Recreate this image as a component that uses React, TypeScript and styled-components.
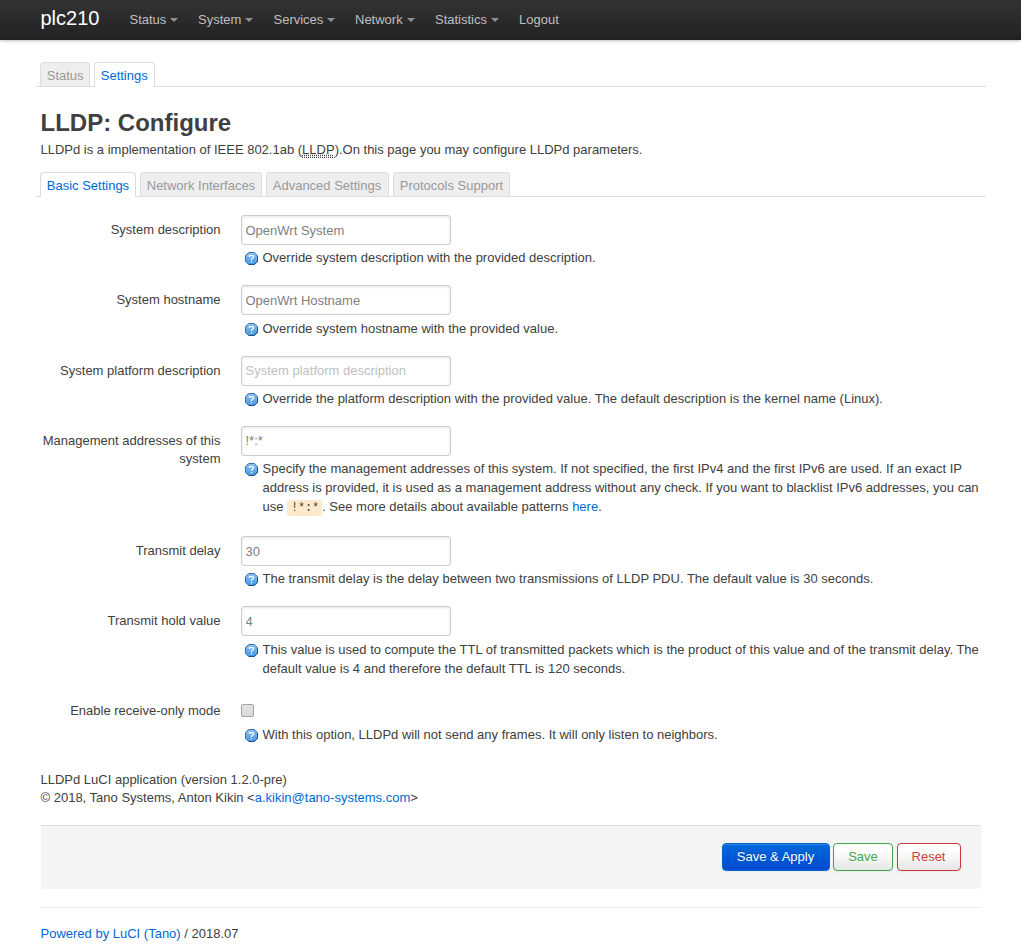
import React from "react";
import styled, { createGlobalStyle, css } from "styled-components";

const GlobalStyle = createGlobalStyle`
  * { box-sizing: border-box; }
  body {
    margin: 0;
    background: #fff;
    color: #404040;
    font-family: "Liberation Sans", Arial, sans-serif;
    font-size: 13px;
    line-height: 18px;
  }
  a { color: #0069d6; text-decoration: none; }
`;

const Header = styled.header`
  height: 40px;
  background: linear-gradient(#333, #222);
  box-shadow: 0 1px 3px rgba(0, 0, 0, 0.25), inset 0 -1px 0 rgba(0, 0, 0, 0.1);
`;

const Container = styled.div`
  width: 940px;
  margin: 0 auto;
`;

const Nav = styled(Container)`
  display: flex;
  height: 40px;
`;

const Brand = styled.a`
  width: 79px;
  padding-top: 8px;
  font-size: 20px;
  line-height: 20px;
  color: #fff;
`;

const NavItem = styled.a<{ $w: number }>`
  display: flex;
  width: ${(p) => p.$w}px;
  padding: 10px 10px 11px;
  line-height: 19px;
  color: #bfbfbf;
  white-space: nowrap;
`;

const Caret = styled.i`
  width: 0;
  height: 0;
  margin: 8px 0 0 4px;
  border: 4px solid transparent;
  border-bottom: 0;
  border-top-color: #909090;
`;

const Tabs = styled.nav<{ $gap: number }>`
  display: flex;
  align-items: flex-end;
  gap: 4px;
  width: 950px;
  height: 25px;
  margin: ${(p) => p.$gap}px 0 0 -4.5px;
  padding-left: 4px;
  border-bottom: 1px solid #ddd;
`;

const Tab = styled.a<{ $active?: boolean; $w: number }>`
  width: ${(p) => p.$w}px;
  height: 24px;
  padding: 4px 0 0 5.75px;
  border: 1px solid #ddd;
  border-bottom: 0;
  border-radius: 4px 4px 0 0;
  background: #eee;
  color: #999;
  white-space: nowrap;
  ${(p) =>
    p.$active &&
    css`
      height: 25px;
      margin-bottom: -1px;
      background: #fff;
      color: #0069d6;
    `}
`;

const Title = styled.h2`
  margin: 18px 0 0;
  font-size: 24px;
  line-height: 36px;
`;

const Intro = styled.p`
  margin: 0;
`;

const Abbr = styled.abbr`
  text-decoration: underline dotted;
  border-bottom: 1px dotted #404040;
`;

const Form = styled.form`
  margin: 18px 0 27px;
`;

const Row = styled.div`
  display: flex;
  & + & { margin-top: 18px; }
`;

const Label = styled.label`
  width: 180px;
  margin-right: 20px;
  padding-top: 6px;
  text-align: right;
`;

const Field = styled.div`
  flex: 1;
`;

const Input = styled.input`
  display: block;
  width: 210px;
  height: 30px;
  padding: 4px;
  border: 1px solid #ccc;
  border-radius: 3px;
  box-shadow: inset 0 1px 3px rgba(0, 0, 0, 0.1);
  color: #808080;
  font: inherit;
  &::placeholder { color: #bfbfbf; }
`;

const Check = styled.input`
  appearance: none;
  display: block;
  width: 13px;
  height: 13px;
  margin: 8px 0 5px;
  border: 1px solid #a3a3a3;
  border-radius: 2px;
  background: linear-gradient(#e2e2e2, #dadada);
`;

const Help = styled.div`
  display: flex;
  padding-top: 3.25px;
  line-height: 19px;
`;

const HelpIcon = styled.svg`
  flex: none;
  width: 13px;
  height: 13px;
  margin: 4px 5px 0 4px;
`;

const Code = styled.code`
  display: inline-block;
  margin-bottom: -3px;
  padding: 1px 3px 1px 4px;
  border-radius: 3px;
  background: #fee9cc;
  color: rgba(0, 0, 0, 0.75);
  font: 12px/14px "Liberation Mono", monospace;
  letter-spacing: -0.2px;
`;

const HelpText = styled.div<{ $tall?: boolean }>`
  padding-bottom: ${(p) => (p.$tall ? 2 : 0)}px;
`;

const Actions = styled.div`
  display: flex;
  justify-content: flex-end;
  height: 64px;
  margin-top: 18px;
  padding: 17px 20px;
  border-top: 1px solid #ddd;
  border-radius: 0 0 3px 3px;
  background: #f4f4f4;
`;

const Button = styled.button<{ $w: number; $tone?: string }>`
  width: ${(p) => p.$w}px;
  height: 28px;
  margin-left: 3.5px;
  padding: 0;
  border: 1px solid ${(p) => p.$tone ?? "#0064cd"};
  border-radius: 4px;
  background: ${(p) => (p.$tone ? "linear-gradient(#fff 25%, #e6e6e6)" : "linear-gradient(#0069dc, #0049d0)")};
  box-shadow: inset 0 1px 0 rgba(255, 255, 255, 0.2), 0 1px 2px rgba(0, 0, 0, 0.05);
  color: ${(p) => p.$tone ?? "#fff"};
  font: inherit;
  text-shadow: ${(p) => (p.$tone ? "0 1px 1px rgba(255, 255, 255, 0.75)" : "0 -1px 0 rgba(0, 0, 0, 0.25)")};
`;

const Footer = styled.footer`
  margin-top: 18px;
  padding-top: 17px;
  border-top: 1px solid #eee;
`;

function HelpMark() {
  return (
    <HelpIcon viewBox="0 0 13 13">
      <defs>
        <linearGradient id="mark" x1="0" y1="0" x2="0" y2="1">
          <stop offset="0" stopColor="#8cc4ef" />
          <stop offset="1" stopColor="#4697e2" />
        </linearGradient>
      </defs>
      <path d="M3.7.5h5.6l3.2 3.2v5.6l-3.2 3.2H3.7L.5 9.3V3.7z" fill="url(#mark)" stroke="#3a6fa6" />
      <path d="M3.7 12.5h5.6l3.2-3.2V4" fill="none" stroke="#24507f" />
      <path d="M4.5 5V3.6h3.3l.7.8v1L6.5 7v1M6.5 9v1.2" fill="none" stroke="#fff" strokeWidth="1.2" />
    </HelpIcon>
  );
}

const menus: [string, number][] = [
  ["Status", 68.5], ["System", 75.5], ["Services", 81.5], ["Network", 80], ["Statistics", 84], ["Logout", 60],
];

const fields: { label: string; value?: string; placeholder?: string; tall?: boolean; help: React.ReactNode }[] = [
  { label: "System description", value: "OpenWrt System", help: "Override system description with the provided description." },
  { label: "System hostname", value: "OpenWrt Hostname", help: "Override system hostname with the provided value." },
  {
    label: "System platform description",
    placeholder: "System platform description",
    help: "Override the platform description with the provided value. The default description is the kernel name (Linux).",
  },
  {
    label: "Management addresses of this system",
    value: "!*:*",
    tall: true,
    help: (
      <>
        Specify the management addresses of this system. If not specified, the first IPv4 and the first IPv6 are used. If an exact IP
        address is provided, it is used as a management address without any check. If you want to blacklist IPv6 addresses, you can
        use <Code>!*:*</Code>. See more details about available patterns <a href="#">here</a>.
      </>
    ),
  },
  {
    label: "Transmit delay",
    value: "30",
    help: "The transmit delay is the delay between two transmissions of LLDP PDU. The default value is 30 seconds.",
  },
  {
    label: "Transmit hold value",
    value: "4",
    help: "This value is used to compute the TTL of transmitted packets which is the product of this value and of the transmit delay. The default value is 4 and therefore the default TTL is 120 seconds.",
  },
];

export default function App() {
  return (
    <>
      <GlobalStyle />
      <Header>
        <Nav>
          <Brand>plc210</Brand>
          {menus.map(([name, w]) => (
            <NavItem key={name} $w={w}>
              {name}
              {name !== "Logout" && <Caret />}
            </NavItem>
          ))}
        </Nav>
      </Header>
      <Container>
        <Tabs $gap={22}>
          <Tab $w={50}>Status</Tab>
          <Tab $w={61} $active>Settings</Tab>
        </Tabs>
        <Title>LLDP: Configure</Title>
        <Intro>
          LLDPd is a implementation of IEEE 802.1ab (<Abbr>LLDP</Abbr>).On this page you may configure LLDPd parameters.
        </Intro>
        <Tabs $gap={13}>
          <Tab $w={96} $active>Basic Settings</Tab>
          <Tab $w={122}>Network Interfaces</Tab>
          <Tab $w={123}>Advanced Settings</Tab>
          <Tab $w={117}>Protocols Support</Tab>
        </Tabs>
        <Form>
          {fields.map((f) => (
            <Row key={f.label}>
              <Label>{f.label}</Label>
              <Field>
                <Input defaultValue={f.value} placeholder={f.placeholder} />
                <Help><HelpMark /><HelpText $tall={f.tall}>{f.help}</HelpText></Help>
              </Field>
            </Row>
          ))}
          <Row>
            <Label>Enable receive-only mode</Label>
            <Field>
              <Check type="checkbox" />
              <Help><HelpMark /><HelpText>With this option, LLDPd will not send any frames. It will only listen to neighbors.</HelpText></Help>
            </Field>
          </Row>
        </Form>
        <div>
          LLDPd LuCI application (version 1.2.0-pre)<br />
          © 2018, Tano Systems, Anton Kikin &lt;<a href="#">a.kikin@tano-systems.com</a>&gt;
        </div>
        <Actions>
          <Button $w={108}>Save &amp; Apply</Button>
          <Button $w={60} $tone="#46a546">Save</Button>
          <Button $w={64} $tone="#ca3c3c">Reset</Button>
        </Actions>
        <Footer><a href="#">Powered by LuCI (Tano)</a> / 2018.07</Footer>
      </Container>
    </>
  );
}
